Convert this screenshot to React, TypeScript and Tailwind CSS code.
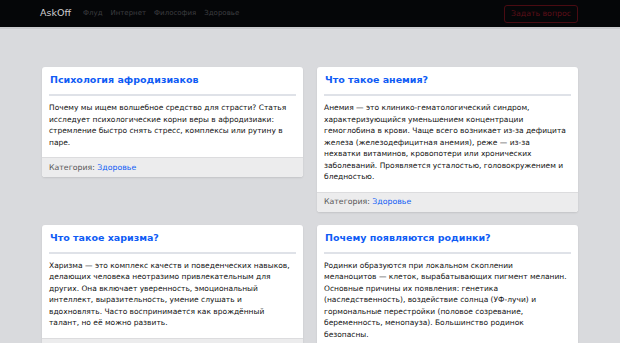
import React from "react";

// Строки разбиты так же, как в макете
const posts = [
  {
    title: "Психология афродизиаков",
    lines: [
      "Почему мы ищем волшебное средство для страсти? Статья",
      "исследует психологические корни веры в афродизиаки:",
      "стремление быстро снять стресс, комплексы или рутину в",
      "паре.",
    ],
    category: "Здоровье",
  },
  {
    title: "Что такое анемия?",
    lines: [
      "Анемия — это клинико-гематологический синдром,",
      "характеризующийся уменьшением концентрации",
      "гемоглобина в крови. Чаще всего возникает из-за дефицита",
      "железа (железодефицитная анемия), реже — из-за",
      "нехватки витаминов, кровопотери или хронических",
      "заболеваний. Проявляется усталостью, головокружением и",
      "бледностью.",
    ],
    category: "Здоровье",
  },
  {
    title: "Что такое харизма?",
    lines: [
      "Харизма — это комплекс качеств и поведенческих навыков,",
      "делающих человека неотразимо привлекательным для",
      "других. Она включает уверенность, эмоциональный",
      "интеллект, выразительность, умение слушать и",
      "вдохновлять. Часто воспринимается как врождённый",
      "талант, но её можно развить.",
    ],
    category: "Философия",
  },
  {
    title: "Почему появляются родинки?",
    lines: [
      "Родинки образуются при локальном скоплении",
      "меланоцитов — клеток, вырабатывающих пигмент меланин.",
      "Основные причины их появления: генетика",
      "(наследственность), воздействие солнца (УФ-лучи) и",
      "гормональные перестройки (половое созревание,",
      "беременность, менопауза). Большинство родинок",
      "безопасны.",
    ],
    category: "Здоровье",
  },
];

export default function App() {
  return (
    <div className="min-h-screen bg-[#d9dadd] font-['DejaVu_Sans']">
      {/* Навбар */}
      <nav className="bg-[#050608] border-b-2 border-[#c9cacd]">
        <div className="w-[536px] mx-auto h-[27px] flex items-center">
          <span className="text-[9.5px] text-[#cfcfcf] -ml-[2px] mr-[12px]">AskOff</span>
          <div className="flex gap-[8px] text-[7px] text-[#3d3e41]">
            <a>Флуд</a>
            <a>Интернет</a>
            <a>Философия</a>
            <a>Здоровье</a>
          </div>
          <button className="ml-auto h-[18px] px-[6px] rounded-[3px] border border-[#4a0b12] text-[#5e0f18] text-[7.8px]">
            Задать вопрос
          </button>
        </div>
      </nav>

      {/* Карточки */}
      <div className="w-[536px] mx-auto pt-[38px] grid grid-cols-2 gap-x-[14px] gap-y-[13px] items-start">
        {posts.map((p) => (
          <div key={p.title} className="bg-white rounded-[3px] shadow-[0_1px_2px_rgba(0,0,0,0.1)]">
            <div className="px-[7px] pt-[6px] pb-[9px]">
              <h2 className="text-[#0f5cf5] font-bold text-[9.5px] leading-[14px] pl-[1px] pb-[7px] border-b-2 border-[#dfe2e8]">
                {p.title}
              </h2>
              <p className="mt-[6px] text-[7.5px] leading-[11.5px] text-[#111] whitespace-nowrap">
                {p.lines.map((l, i) => (
                  <React.Fragment key={i}>
                    {l}
                    {i < p.lines.length - 1 && <br />}
                  </React.Fragment>
                ))}
              </p>
            </div>
            <div className="bg-[#ececed] border-t border-[#dcdcde] rounded-b-[3px] h-[20px] px-[7px] flex items-center text-[7.8px] text-[#555]">
              Категория:&nbsp;<a className="text-[#0f5cf5]">{p.category}</a>
            </div>
          </div>
        ))}
      </div>
    </div>
  );
}
